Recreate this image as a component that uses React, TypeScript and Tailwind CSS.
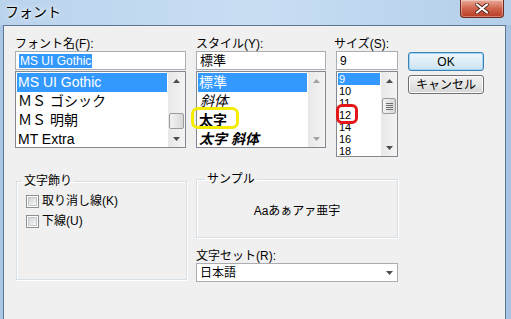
import React from "react";

const F = "font-['Liberation_Sans','Noto_Sans_CJK_JP',sans-serif]";

function UpArrow({ disabled }: { disabled?: boolean }) {
  return (
    <svg width="7" height="4" viewBox="0 0 7 4">
      <path d="M0 4 L3.5 0 L7 4 Z" fill={disabled ? "#a3a3a3" : "#4d4d4d"} />
    </svg>
  );
}
function DownArrow({ disabled }: { disabled?: boolean }) {
  return (
    <svg width="7" height="4" viewBox="0 0 7 4">
      <path d="M0 0 L3.5 4 L7 0 Z" fill={disabled ? "#a3a3a3" : "#4d4d4d"} />
    </svg>
  );
}

function Thumb({ grip, mt }: { grip?: boolean; mt: string }) {
  return (
    <div
      className={`${mt} mx-[1px] h-[16px] rounded-[2px] border border-[#9b9b9b] bg-gradient-to-r from-[#f2f2f2] via-[#e6e6e6] to-[#d6d6d6] flex flex-col items-center justify-center gap-[1px]`}
    >
      {grip && (
        <>
          <div className="w-[7px] h-[1px] bg-[#6f6f6f]" />
          <div className="w-[7px] h-[1px] bg-[#6f6f6f]" />
          <div className="w-[7px] h-[1px] bg-[#6f6f6f]" />
          <div className="w-[7px] h-[1px] bg-[#6f6f6f]" />
        </>
      )}
    </div>
  );
}

function ScrollBar({
  width,
  thumb,
  grip,
  disabled,
}: {
  width: string;
  thumb?: string;
  grip?: boolean;
  disabled?: boolean;
}) {
  return (
    <div className={`${width} h-full bg-gradient-to-r from-[#e8e8e8] to-[#f4f4f4] flex flex-col`}>
      <div className="h-[17px] flex items-center justify-center">
        <UpArrow disabled={disabled} />
      </div>
      <div className="flex-1">{thumb && <Thumb mt={thumb} grip={grip} />}</div>
      <div className="h-[17px] flex items-center justify-center">
        <DownArrow disabled={disabled} />
      </div>
    </div>
  );
}

function Checkbox({ label }: { label: string }) {
  return (
    <div className="h-[16px] flex items-center">
      <div className="w-[13px] h-[13px] border border-[#8e8f8f] bg-white p-[1px]">
        <div className="w-full h-full border border-[#c4c7cc] bg-gradient-to-br from-[#d2d4d6] to-[#f7f7f7]" />
      </div>
      <span className="ml-[3px] text-[12px] leading-[14px] text-black">{label}</span>
    </div>
  );
}

export default function App() {
  return (
    <div className={`${F} w-[511px] h-[319px] overflow-hidden flex flex-col bg-gradient-to-r from-[#a9c6e6] via-[#bcd6ef] to-[#a6c3e3]`}>
      {/* title bar */}
      <div className="h-[25px] flex items-start bg-gradient-to-r from-[#bad3ec] via-[#c8def3] to-[#b4cfea]">
        <div className="ml-[5px] mt-[4px] text-[14px] leading-[17px] text-black [text-shadow:0_0_6px_#ffffff,0_0_3px_#ffffff]">
          フォント
        </div>
        <div className="ml-auto mr-[7px] w-[44px] h-[18px] rounded-b-[4px] border border-t-0 border-[#6d2a1c] bg-gradient-to-b from-[#e9a99a] via-[#d0644c] to-[#b83b22] flex items-center justify-center shadow-[inset_0_0_0_1px_rgba(255,255,255,0.35)]">
          <svg width="14" height="11" viewBox="0 0 14 11">
            <path d="M2 1.5 L12 9.5 M12 1.5 L2 9.5" stroke="#4a1a10" strokeWidth="3.6" strokeLinecap="round" />
            <path d="M2 1.5 L12 9.5 M12 1.5 L2 9.5" stroke="#ffffff" strokeWidth="2.2" strokeLinecap="round" />
          </svg>
        </div>
      </div>

      <div className="flex-1 flex">
        <div className="w-[3px]" />
        <div className="flex-1 border border-b-0 border-[#5f7690] bg-[#f0f0f0] pl-[11px] pt-[11px] text-black">
          {/* top row */}
          <div className="flex items-start">
            {/* font name */}
            <div className="w-[171px]">
              <div className="h-[14px] text-[12px] leading-[14px]">フォント名(F):</div>
              <div className="h-[19px] border border-[#abadb3] bg-white flex items-center pl-[3px]">
                <span className="bg-[#3399ff] text-white text-[12px] leading-[14px] px-[1px]">MS UI Gothic</span>
              </div>
              <div className="mt-[1px] h-[77px] border border-[#828790] bg-white flex overflow-hidden">
                <div className="flex-1 p-[1px] text-[14px] leading-[19px]">
                  <div className="h-[19px] bg-[#3399ff] text-white pl-[1px]">MS UI Gothic</div>
                  <div className="h-[19px] pl-[1px]">ＭＳ ゴシック</div>
                  <div className="h-[19px] pl-[1px]">ＭＳ 明朝</div>
                  <div className="h-[19px] pl-[1px]">MT Extra</div>
                </div>
                <ScrollBar width="w-[17px]" thumb="mt-[24px]" />
              </div>
            </div>

            {/* style */}
            <div className="ml-[10px] w-[130px] relative">
              <div className="h-[14px] text-[12px] leading-[14px]">スタイル(Y):</div>
              <div className="h-[19px] border border-[#abadb3] bg-white flex items-center pl-[3px] text-[13px] leading-[16px]">
                標準
              </div>
              <div className="mt-[1px] h-[77px] border border-[#828790] bg-white flex overflow-hidden">
                <div className="flex-1 p-[1px] text-[14px] leading-[19px]">
                  <div className="h-[19px] bg-[#3399ff] text-white pl-[1px]">標準</div>
                  <div className="h-[19px] pl-[2px] italic">斜体</div>
                  <div className="h-[19px] pl-[1px] font-bold">太字</div>
                  <div className="h-[19px] pl-[1px] font-bold italic">太字 斜体</div>
                </div>
                <ScrollBar width="w-[17px]" disabled />
              </div>
              <div className="absolute left-[-5px] top-[70px] w-[48px] h-[22px] rounded-[7px] border-[3px] border-[#f5ec00]" />
            </div>

            {/* size */}
            <div className="ml-[10px] w-[62px] relative">
              <div className="h-[14px] text-[12px] leading-[14px] -ml-[2px]">サイズ(S):</div>
              <div className="h-[19px] border border-[#abadb3] bg-white flex items-center pl-[3px] text-[12px] leading-[14px]">
                9
              </div>
              <div className="mt-[1px] h-[86px] border border-[#828790] bg-white flex overflow-hidden">
                <div className="flex-1 p-[1px] text-[11px] leading-[12px]">
                  <div className="h-[12px] bg-[#3399ff] text-white pl-[1px]">9</div>
                  <div className="h-[12px] pl-[1px]">10</div>
                  <div className="h-[12px] pl-[1px]">11</div>
                  <div className="h-[12px] pl-[1px]">12</div>
                  <div className="h-[12px] pl-[1px]">14</div>
                  <div className="h-[12px] pl-[1px]">16</div>
                  <div className="h-[12px] pl-[1px]">18</div>
                </div>
                <ScrollBar width="w-[16px]" thumb="mt-[9px]" grip />
              </div>
              <div className="absolute left-[0px] top-[67px] w-[22px] h-[20px] rounded-[6px] border-[3px] border-[#e3161b]" />
            </div>

            {/* buttons */}
            <div className="ml-[10px] w-[76px] pt-[15px] flex flex-col gap-[4px]">
              <div className="h-[19px] rounded-[3px] border border-[#3c7fb1] shadow-[inset_0_0_0_1px_#9fd6f6] bg-gradient-to-b from-[#eef6fb] via-[#dfeef7] to-[#c9e1f0] flex items-center justify-center text-[12px] leading-[14px]">
                OK
              </div>
              <div className="h-[19px] rounded-[3px] border border-[#707070] shadow-[inset_0_0_0_1px_#fbfbfb] bg-gradient-to-b from-[#f2f2f2] via-[#e6e6e6] to-[#d4d4d4] flex items-center justify-center text-[12px] leading-[14px]">
                キャンセル
              </div>
            </div>
          </div>

          {/* bottom row */}
          <div className="mt-[17px] flex items-start">
            <fieldset className="ml-[1px] w-[171px] h-[106px] border border-[#d5dfe5] shadow-[1px_1px_0_#ffffff,inset_1px_1px_0_#ffffff] px-[5px]">
              <legend className="px-[2px] text-[12px] leading-[14px]">文字飾り</legend>
              <div className="pl-[4px] mt-[5px] flex flex-col gap-[4px]">
                <Checkbox label="取り消し線(K)" />
                <Checkbox label="下線(U)" />
              </div>
            </fieldset>

            <div className="ml-[9px] w-[202px] -mt-[2px]">
              <fieldset className="h-[66px] border border-[#d5dfe5] shadow-[1px_1px_0_#ffffff,inset_1px_1px_0_#ffffff] px-[8px]">
                <legend className="px-[2px] text-[12px] leading-[14px]">サンプル</legend>
                <div className="h-[47px] flex items-center justify-center text-[12px] leading-[14px] pt-[3px]">
                  Aaあぁアァ亜宇
                </div>
              </fieldset>
              <div className="mt-[11px] h-[14px] text-[12px] leading-[14px]">文字セット(R):</div>
              <div className="h-[19px] border border-[#abadb3] bg-white flex items-center pl-[3px] pr-[4px] text-[12px] leading-[14px]">
                <span className="flex-1">日本語</span>
                <DownArrow />
              </div>
            </div>
          </div>
        </div>
        <div className="w-[5px]" />
      </div>
    </div>
  );
}
